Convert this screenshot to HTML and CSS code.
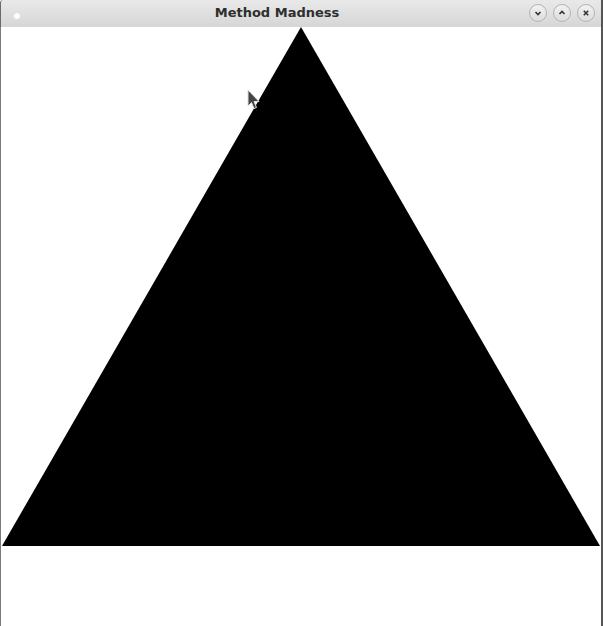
FILE: index.html
```html
<!DOCTYPE html>
<html>
<head>
<meta charset="utf-8">
<link rel="stylesheet" href="styles.css">
</head>
<body>
<div class="window">
  <div class="titlebar">
    <span class="menu-dot"></span>
    <span class="title">Method Madness</span>
    <div class="controls">
      <span class="btn"><svg width="10" height="10" viewBox="0 0 10 10"><path d="M2.5 4 L5 6.5 L7.5 4" fill="none" stroke="#333" stroke-width="1.6"/></svg></span>
      <span class="btn"><svg width="10" height="10" viewBox="0 0 10 10"><path d="M2.5 6 L5 3.5 L7.5 6" fill="none" stroke="#333" stroke-width="1.6"/></svg></span>
      <span class="btn"><svg width="10" height="10" viewBox="0 0 10 10"><path d="M2.8 2.8 L7.2 7.2 M7.2 2.8 L2.8 7.2" fill="none" stroke="#333" stroke-width="1.6"/></svg></span>
    </div>
  </div>
  <div class="content">
    <svg class="canvas" width="600" height="599" viewBox="0 0 600 599">
      <polygon points="300,0 1,519 599,519" fill="#000"/>
    </svg>
    <svg class="cursor" width="14" height="22" viewBox="0 0 14 22">
      <path d="M1 1 L1 17 L4.5 13.5 L7 19.5 L9.5 18.5 L7 12.5 L12 12.5 Z" fill="#444" stroke="#ddd" stroke-width="1"/>
    </svg>
  </div>
</div>
</body>
</html>
```
FILE: styles.css
```css
html, body {
  margin: 0;
  padding: 0;
  background: #fff;
}
.window {
  width: 603px;
  height: 626px;
  display: flex;
  flex-direction: column;
  overflow: hidden;
}
.titlebar {
  height: 27px;
  flex: none;
  display: flex;
  align-items: center;
  position: relative;
  background: linear-gradient(#e9e9e9, #d6d6d6);
  border-left: 1px solid #6a6a6a;
  border-right: 2px solid #555;
  box-sizing: border-box;
  border-top-left-radius: 3px;
}
.menu-dot {
  position: absolute;
  left: 12px;
  top: 12px;
  width: 8px;
  height: 8px;
  border-radius: 50%;
  background: radial-gradient(#fff 35%, #e6e6e6 60%, #c8c8c8);
}
.title {
  flex: 1;
  text-align: center;
  font-family: "DejaVu Sans", sans-serif;
  font-weight: bold;
  font-size: 13px;
  color: #2e2e2e;
  padding-right: 48px;
  margin-top: -2px;
}
.controls {
  position: absolute;
  right: 6px;
  top: 4px;
  display: flex;
  gap: 6px;
}
.btn {
  width: 16px;
  height: 16px;
  border-radius: 50%;
  border: 1px solid #b4b4b4;
  background: linear-gradient(#f2f2f2, #dcdcdc);
  display: flex;
  align-items: center;
  justify-content: center;
}
.content {
  flex: 1;
  position: relative;
  border-left: 1px solid #7a7a7a;
  border-right: 2px solid #555;
  background: #fff;
}
.canvas {
  display: block;
}
.cursor {
  position: absolute;
  left: 246px;
  top: 62px;
}
```
